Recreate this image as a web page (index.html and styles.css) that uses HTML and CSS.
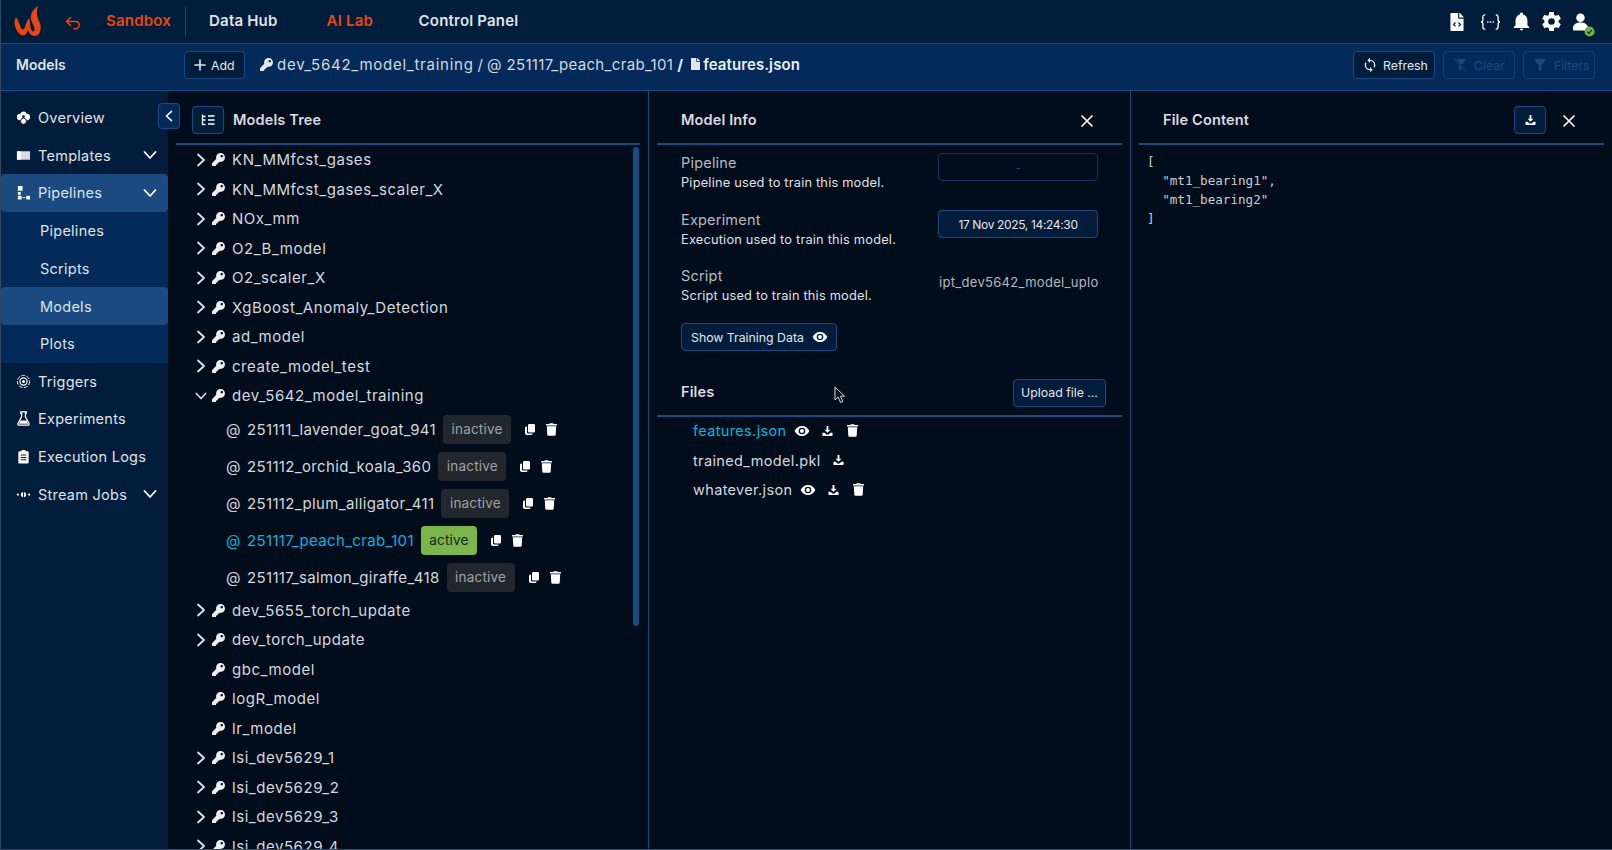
FILE: index.html
```html
<!DOCTYPE html>
<html lang="en">
<head>
<meta charset="utf-8">
<title>Models</title>
<link rel="stylesheet" href="styles.css">
</head>
<body>
<svg class="defs" width="0" height="0" aria-hidden="true">
  <symbol id="i-key" viewBox="0 0 512 512"><path d="M512 176c0 97.2-78.8 176-176 176-11.2 0-22.2-1.1-32.8-3.1l-24 27A24 24 0 0 1 261.200 384H224v40c0 13.300-10.700 24-24 24h-40v40c0 13.300-10.700 24-24 24H24c-13.300 0-24-10.700-24-24v-78.100c0-6.300 2.500-12.400 7-16.900l161.800-161.800C163.100 213.800 160 195.300 160 176 160 78.800 238.800 0 336 0c97.500 0 176 78.500 176 176zM336 128c0 26.500 21.500 48 48 48s48-21.500 48-48-21.500-48-48-48-48 21.500-48 48z"/></symbol>
  <symbol id="i-trash" viewBox="0 0 448 512"><path d="M432 32H312l-9.400-18.700A24 24 0 0 0 281.100 0H166.800a23.700 23.700 0 0 0-21.400 13.300L136 32H16A16 16 0 0 0 0 48v32a16 16 0 0 0 16 16h416a16 16 0 0 0 16-16V48a16 16 0 0 0-16-16zM53.200 467a48 48 0 0 0 47.900 45h245.800a48 48 0 0 0 47.900-45L416 128H32z"/></symbol>
  <symbol id="i-copy" viewBox="0 0 24 24"><path d="M8 3.500A2.500 2.500 0 0 1 10.500 1h9A2.500 2.500 0 0 1 22 3.500v12a2.500 2.500 0 0 1-2.500 2.500h-9A2.500 2.500 0 0 1 8 15.500z"/><path d="M5 6h1v11.500A2.500 2.500 0 0 0 8.500 20H17v.5A2.500 2.500 0 0 1 14.500 23h-9A3.500 3.500 0 0 1 2 19.500V9a3 3 0 0 1 3-3z"/></symbol>
  <symbol id="i-eye" viewBox="0 0 24 24"><path d="M12 9a3 3 0 1 0 0 6 3 3 0 0 0 0-6m0 8a5 5 0 1 1 0-10 5 5 0 0 1 0 10m0-12.500C7 4.500 2.730 7.610 1 12c1.730 4.390 6 7.500 11 7.500s9.270-3.110 11-7.500c-1.730-4.390-6-7.500-11-7.500z"/></symbol>
  <symbol id="i-download" viewBox="0 0 24 24"><path d="M10 1h4v8.500h4.500L12 16 5.500 9.500H10z"/><path d="M1 16h5l3.500 3.500h5L18 16h5v5.500a1.500 1.500 0 0 1-1.500 1.500h-19A1.500 1.500 0 0 1 1 21.500z"/></symbol>
  <symbol id="i-right" viewBox="0 0 12 14"><path d="M3 1.500 9 7l-6 5.500" fill="none" stroke="currentColor" stroke-width="1.800" stroke-linecap="round" stroke-linejoin="round"/></symbol>
  <symbol id="i-down" viewBox="0 0 14 12"><path d="M1.500 3 7 9l5.500-6" fill="none" stroke="currentColor" stroke-width="1.800" stroke-linecap="round" stroke-linejoin="round"/></symbol>
  <symbol id="i-close" viewBox="0 0 14 14"><path d="M2 2l10 10M12 2 2 12" fill="none" stroke="currentColor" stroke-width="1.700" stroke-linecap="round"/></symbol>
  <symbol id="i-plus" viewBox="0 0 12 12"><path d="M6 1v10M1 6h10" fill="none" stroke="currentColor" stroke-width="1.600" stroke-linecap="round"/></symbol>
  <symbol id="i-sync" viewBox="0 0 24 24"><path d="M12 18a6 6 0 0 1-6-6c0-1 .25-1.970.7-2.800L5.240 7.740A7.900 7.900 0 0 0 4 12a8 8 0 0 0 8 8v3l4-4-4-4m0-11V1L8 5l4 4V6a6 6 0 0 1 6 6c0 1-.25 1.970-.7 2.800l1.460 1.460A7.900 7.900 0 0 0 20 12a8 8 0 0 0-8-8z"/></symbol>
  <symbol id="i-filter" viewBox="0 0 24 24"><path d="M14 12v7.880c.04.3-.06.62-.29.830a1 1 0 0 1-1.410 0l-2.010-2.010a1 1 0 0 1-.29-.83V12h-.03L4.210 4.620A1 1 0 0 1 5 3h14a1 1 0 0 1 .79 1.620L14.030 12z"/></symbol>
  <symbol id="i-filter-off" viewBox="0 0 24 24"><path d="M14 12v7.880c.04.3-.06.62-.29.830a1 1 0 0 1-1.410 0l-2.010-2.010a1 1 0 0 1-.29-.83V12h-.03L4.210 4.620A1 1 0 0 1 5 3h14a1 1 0 0 1 .79 1.620L14.030 12z"/><path d="M3 2l19 20" fill="none" stroke="#042a5a" stroke-width="3"/><path d="M3 2l19 20" fill="none" stroke="currentColor" stroke-width="1.500"/></symbol>
  <symbol id="i-file" viewBox="0 0 384 512"><path d="M224 136V0H24C10.700 0 0 10.700 0 24v464c0 13.300 10.700 24 24 24h336c13.300 0 24-10.700 24-24V160H248c-13.200 0-24-10.800-24-24zM384 122v6H256V0h6.100c6.400 0 12.500 2.500 17 7l97.900 98c4.500 4.500 7 10.600 7 17z"/></symbol>
</svg>

<div class="app">
  <header class="topbar">
    <svg class="logo" viewBox="0 0 28 31" aria-hidden="true"><path d="M2 11C-1 16 1 25 7 29c3 1.500 6-1 7-5 1 4 5 7 9 5.500 4-2.500 5-8.500 2-14.500-2-4-3-9-1-15-5 3-8 8-7 13 .5 4 4 7 3.500 11-.3 2-2.500 2-3.500-1-1-3-1-7-1.500-11-2.500 2-3.500 6-4.500 9-1 3-3 3-4 1-1.500-3-2-7-5-11z"/></svg>
    <svg class="back" viewBox="0 0 16 14" aria-hidden="true"><path d="M5.500 1.500 1.500 5.500l4 4M1.500 5.500h9a3.700 3.700 0 0 1 3.700 3.600 3.700 3.700 0 0 1-3.700 3.700H9" fill="none" stroke="currentColor" stroke-width="1.500" stroke-linecap="round" stroke-linejoin="round"/></svg>
    <span class="top-link top-link-sandbox orange">Sandbox</span>
    <span class="top-div"></span>
    <span class="top-link top-link-hub">Data Hub</span>
    <span class="top-link top-link-lab orange">AI Lab</span>
    <span class="top-link top-link-panel">Control Panel</span>
    <div class="top-icons">
      <svg class="ti ti-file" viewBox="0 0 384 512" aria-hidden="true"><use href="#i-file"/><path d="M150 270 95 325l55 55M234 270l55 55-55 55" fill="none" stroke="#021f3d" stroke-width="36"/></svg>
      <svg class="ti ti-braces" viewBox="0 0 22 18" aria-hidden="true"><path d="M5 1.500C3 1.500 3 3 3 4.500V7c0 1.200-.7 2-2 2 1.300 0 2 .8 2 2v2.500c0 1.500 0 3 2 3M17 1.500c2 0 2 1.500 2 3V7c0 1.200.7 2 2 2-1.300 0-2 .8-2 2v2.500c0 1.500 0 3-2 3" fill="none" stroke="#fff" stroke-width="1.400" stroke-linecap="round"/><path d="M7.500 8.300h1.400v1.400H7.500zM10.300 8.300h1.400v1.400h-1.400zM13.100 8.300h1.400v1.400h-1.400z" fill="#fff"/></svg>
      <svg class="ti ti-bell" viewBox="2 1.500 20 22" aria-hidden="true"><path d="M21 19v1H3v-1l2-2v-6c0-3.100 2.030-5.830 5-6.710V4a2 2 0 0 1 4 0v.29c2.970.88 5 3.610 5 6.710v6zM14 21a2 2 0 0 1-4 0z"/></svg>
      <svg class="ti ti-gear" viewBox="2 2 20 20" aria-hidden="true"><path d="M12 15.500a3.500 3.500 0 1 1 0-7 3.500 3.500 0 0 1 0 7m7.430-2.530c.04-.32.07-.64.07-.97s-.03-.66-.07-1l2.110-1.630a.5.500 0 0 0 .12-.64l-2-3.460a.5.500 0 0 0-.61-.22l-2.490 1a7.300 7.300 0 0 0-1.690-.98l-.37-2.650A.5.500 0 0 0 14 2h-4a.5.500 0 0 0-.5.420l-.37 2.650a7.300 7.300 0 0 0-1.690.98l-2.490-1a.5.500 0 0 0-.61.220l-2 3.460a.5.500 0 0 0 .12.64L4.570 11c-.04.34-.07.67-.07 1s.03.65.07.97l-2.110 1.660a.5.500 0 0 0-.12.64l2 3.460c.12.22.39.3.61.22l2.490-1.010c.52.4 1.060.74 1.690.99l.37 2.650c.04.24.25.42.5.42h4c.25 0 .46-.18.5-.42l.37-2.650c.63-.26 1.170-.59 1.690-.99l2.490 1.010c.22.08.49 0 .61-.22l2-3.460a.5.500 0 0 0-.12-.64z"/></svg>
      <span class="user">
        <svg class="ti ti-user" viewBox="0 0 18 19" aria-hidden="true"><circle cx="9" cy="5" r="4.500"/><path d="M1 16c0-4 3.500-6 8-6s8 2 8 6v1.500a1 1 0 0 1-1 1H2a1 1 0 0 1-1-1z"/></svg>
        <svg class="user-badge" viewBox="0 0 12 12" aria-hidden="true"><circle cx="6" cy="6" r="5.500" fill="#79b04a"/><path d="M3.400 6.200 5.300 8l3.300-3.800" fill="none" stroke="#0b2a22" stroke-width="1.300"/></svg>
      </span>
    </div>
  </header>

  <div class="subbar">
    <span class="sub-title">Models</span>
    <button class="btn btn-add"><svg class="ic12" aria-hidden="true"><use href="#i-plus"/></svg>Add</button>
    <div class="crumbs">
      <svg class="ic14 fill" aria-hidden="true"><use href="#i-key"/></svg>
      <span class="crumb-a">dev_5642_model_training</span><span class="slash">/</span><span class="crumb-b">@ 251117_peach_crab_101</span><span class="slash slash-b">/</span>
      <svg class="crumb-file fill" aria-hidden="true"><use href="#i-file"/></svg>
      <b>features.json</b>
    </div>
    <div class="sub-actions">
      <button class="btn btn-refresh"><svg class="ic16 fill" aria-hidden="true"><use href="#i-sync"/></svg>Refresh</button>
      <button class="btn btn-off btn-clear"><svg class="ic16 fill" aria-hidden="true"><use href="#i-filter-off"/></svg>Clear</button>
      <button class="btn btn-off btn-filters"><svg class="ic16 fill" aria-hidden="true"><use href="#i-filter"/></svg>Filters</button>
    </div>
  </div>

  <div class="body">
    <nav class="side">
      <a class="nav"><svg class="nav-ic" viewBox="0 0 16 16" aria-hidden="true"><path d="M8 1.500a3.600 3.600 0 0 1 3.400 2.500A3.500 3.500 0 0 1 15 7.500 3.500 3.500 0 0 1 12 11H4.200A3.500 3.500 0 0 1 1 7.500 3.500 3.500 0 0 1 4.600 4 3.600 3.600 0 0 1 8 1.500z"/><circle cx="8" cy="12" r="3.200" stroke="#021d3b" stroke-width="1"/><circle cx="8" cy="7" r="1.500" fill="#021d3b"/></svg><span>Overview</span></a>
      <a class="nav"><svg class="nav-ic" viewBox="0 0 16 16" aria-hidden="true"><path d="M1 3.500h14v9H1z" opacity=".85"/><path d="M1 3.500h4v9H1z"/></svg><span>Templates</span><svg class="nav-chev" aria-hidden="true"><use href="#i-down"/></svg></a>
      <a class="nav nav-on"><svg class="nav-ic" viewBox="0 0 16 16" aria-hidden="true"><path d="M2 1h5v5H2zM2 7.500h3v3H2zM2 11.500h4v4H2zM11 11.500h4v4h-4z"/><path d="M7 13.500h3" stroke="#fff"/></svg><span>Pipelines</span><svg class="nav-chev" aria-hidden="true"><use href="#i-down"/></svg></a>
      <div class="subnav">
        <a class="nav nav-sub"><span>Pipelines</span></a>
        <a class="nav nav-sub"><span>Scripts</span></a>
        <a class="nav nav-sub nav-on"><span>Models</span></a>
        <a class="nav nav-sub"><span>Plots</span></a>
      </div>
      <a class="nav"><svg class="nav-ic" viewBox="0 0 16 16" aria-hidden="true"><g fill="none" stroke="#fff"><circle cx="8" cy="8" r="6.500" stroke-dasharray="4 1.500"/><circle cx="8" cy="8" r="3.800" stroke-width="1.300"/></g><circle cx="8" cy="8" r="1.600"/></svg><span>Triggers</span></a>
      <a class="nav"><svg class="nav-ic" viewBox="0 0 16 16" aria-hidden="true"><path d="M5 1h6v1.500h-1V6l4 7.500a1 1 0 0 1-.9 1.500H2.900a1 1 0 0 1-.9-1.500L6 6V2.500H5z" fill="none" stroke="#fff" stroke-width="1.300"/><path d="M4.600 10h6.800l1.400 3.700H3.200z"/></svg><span>Experiments</span></a>
      <a class="nav"><svg class="nav-ic" viewBox="0 0 16 16" aria-hidden="true"><path d="M3.500 2.500H6V1h4v1.500h2.500A1 1 0 0 1 13.500 3.500v11a1 1 0 0 1-1 1h-9a1 1 0 0 1-1-1v-11a1 1 0 0 1 1-1z"/><path d="M5 6.500h6M5 9h6M5 11.500h6" stroke="#021d3b" stroke-width="1.100"/></svg><span>Execution Logs</span></a>
      <a class="nav"><svg class="nav-ic" viewBox="0 0 16 16" aria-hidden="true"><circle cx="8" cy="8" r="2.800"/><circle cx="2" cy="8" r="1.200"/><circle cx="14" cy="8" r="1.200"/><path d="M8 3.500v9" stroke="#021d3b"/></svg><span>Stream Jobs</span><svg class="nav-chev" aria-hidden="true"><use href="#i-down"/></svg></a>
    </nav>

    <button class="collapse" aria-label="Collapse"><svg class="ic-collapse" aria-hidden="true"><use href="#i-right"/></svg></button>

    <section class="panel">
      <div class="panel-head head-tree">
        <button class="icon-btn"><svg class="ic-tree" viewBox="0 0 14 14" aria-hidden="true"><path d="M1.500 1.500v10.500M1.500 3.500h3M1.500 7h3M1.500 11.500h3M7 3h6.500M7 7h6.500M7 11h6.500" fill="none" stroke="#fff" stroke-width="1.300"/></svg></button>
        <h2>Models Tree</h2>
      </div>
      <div class="tree">
        <div class="tree-rows">
          <div class="row"><svg class="chev" aria-hidden="true"><use href="#i-right"/></svg><svg class="key" aria-hidden="true"><use href="#i-key"/></svg><span>KN_MMfcst_gases</span></div>
          <div class="row"><svg class="chev" aria-hidden="true"><use href="#i-right"/></svg><svg class="key" aria-hidden="true"><use href="#i-key"/></svg><span>KN_MMfcst_gases_scaler_X</span></div>
          <div class="row"><svg class="chev" aria-hidden="true"><use href="#i-right"/></svg><svg class="key" aria-hidden="true"><use href="#i-key"/></svg><span>NOx_mm</span></div>
          <div class="row"><svg class="chev" aria-hidden="true"><use href="#i-right"/></svg><svg class="key" aria-hidden="true"><use href="#i-key"/></svg><span>O2_B_model</span></div>
          <div class="row"><svg class="chev" aria-hidden="true"><use href="#i-right"/></svg><svg class="key" aria-hidden="true"><use href="#i-key"/></svg><span>O2_scaler_X</span></div>
          <div class="row"><svg class="chev" aria-hidden="true"><use href="#i-right"/></svg><svg class="key" aria-hidden="true"><use href="#i-key"/></svg><span>XgBoost_Anomaly_Detection</span></div>
          <div class="row"><svg class="chev" aria-hidden="true"><use href="#i-right"/></svg><svg class="key" aria-hidden="true"><use href="#i-key"/></svg><span>ad_model</span></div>
          <div class="row"><svg class="chev" aria-hidden="true"><use href="#i-right"/></svg><svg class="key" aria-hidden="true"><use href="#i-key"/></svg><span>create_model_test</span></div>
          <div class="row"><svg class="chev" aria-hidden="true"><use href="#i-down"/></svg><svg class="key" aria-hidden="true"><use href="#i-key"/></svg><span>dev_5642_model_training</span></div>

          <div class="child"><span class="at">@</span><span class="cname">251111_lavender_goat_941</span><span class="tag">inactive</span><svg class="act-copy" aria-hidden="true"><use href="#i-copy"/></svg><svg class="act-trash" aria-hidden="true"><use href="#i-trash"/></svg></div>
          <div class="child"><span class="at">@</span><span class="cname">251112_orchid_koala_360</span><span class="tag">inactive</span><svg class="act-copy" aria-hidden="true"><use href="#i-copy"/></svg><svg class="act-trash" aria-hidden="true"><use href="#i-trash"/></svg></div>
          <div class="child"><span class="at">@</span><span class="cname">251112_plum_alligator_411</span><span class="tag">inactive</span><svg class="act-copy" aria-hidden="true"><use href="#i-copy"/></svg><svg class="act-trash" aria-hidden="true"><use href="#i-trash"/></svg></div>
          <div class="child child-on"><span class="at">@</span><span class="cname">251117_peach_crab_101</span><span class="tag tag-on">active</span><svg class="act-copy" aria-hidden="true"><use href="#i-copy"/></svg><svg class="act-trash" aria-hidden="true"><use href="#i-trash"/></svg></div>
          <div class="child"><span class="at">@</span><span class="cname">251117_salmon_giraffe_418</span><span class="tag">inactive</span><svg class="act-copy" aria-hidden="true"><use href="#i-copy"/></svg><svg class="act-trash" aria-hidden="true"><use href="#i-trash"/></svg></div>

          <div class="row"><svg class="chev" aria-hidden="true"><use href="#i-right"/></svg><svg class="key" aria-hidden="true"><use href="#i-key"/></svg><span>dev_5655_torch_update</span></div>
          <div class="row"><svg class="chev" aria-hidden="true"><use href="#i-right"/></svg><svg class="key" aria-hidden="true"><use href="#i-key"/></svg><span>dev_torch_update</span></div>
          <div class="row"><span class="chev"></span><svg class="key" aria-hidden="true"><use href="#i-key"/></svg><span>gbc_model</span></div>
          <div class="row"><span class="chev"></span><svg class="key" aria-hidden="true"><use href="#i-key"/></svg><span>logR_model</span></div>
          <div class="row"><span class="chev"></span><svg class="key" aria-hidden="true"><use href="#i-key"/></svg><span>lr_model</span></div>
          <div class="row"><svg class="chev" aria-hidden="true"><use href="#i-right"/></svg><svg class="key" aria-hidden="true"><use href="#i-key"/></svg><span>lsi_dev5629_1</span></div>
          <div class="row"><svg class="chev" aria-hidden="true"><use href="#i-right"/></svg><svg class="key" aria-hidden="true"><use href="#i-key"/></svg><span>lsi_dev5629_2</span></div>
          <div class="row"><svg class="chev" aria-hidden="true"><use href="#i-right"/></svg><svg class="key" aria-hidden="true"><use href="#i-key"/></svg><span>lsi_dev5629_3</span></div>
          <div class="row"><svg class="chev" aria-hidden="true"><use href="#i-right"/></svg><svg class="key" aria-hidden="true"><use href="#i-key"/></svg><span>lsi_dev5629_4</span></div>
        </div>
        <div class="scrollthumb"></div>
      </div>
    </section>

    <section class="panel panel-b">
      <div class="panel-head head-text">
        <h2>Model Info</h2>
        <svg class="close" aria-hidden="true"><use href="#i-close"/></svg>
      </div>
      <div class="info">
        <div class="field">
          <div><div class="f-label">Pipeline</div><div class="f-desc">Pipeline used to train this model.</div></div>
          <div class="f-box f-box-off">-</div>
        </div>
        <div class="field">
          <div><div class="f-label">Experiment</div><div class="f-desc">Execution used to train this model.</div></div>
          <div class="f-box">17 Nov 2025, 14:24:30</div>
        </div>
        <div class="field">
          <div><div class="f-label">Script</div><div class="f-desc">Script used to train this model.</div></div>
          <div class="f-text">ipt_dev5642_model_uplo</div>
        </div>
        <button class="btn btn-train">Show Training Data<svg class="ic-eye" aria-hidden="true"><use href="#i-eye"/></svg></button>
      </div>
      <div class="panel-head head-files">
        <h2>Files</h2>
        <button class="btn btn-upload">Upload file ...</button>
      </div>
      <div class="files">
        <div class="file file-on"><span>features.json</span><svg class="ic-eye" aria-hidden="true"><use href="#i-eye"/></svg><svg class="ic-dl" aria-hidden="true"><use href="#i-download"/></svg><svg class="act-trash" aria-hidden="true"><use href="#i-trash"/></svg></div>
        <div class="file"><span>trained_model.pkl</span><svg class="ic-dl" aria-hidden="true"><use href="#i-download"/></svg></div>
        <div class="file"><span>whatever.json</span><svg class="ic-eye" aria-hidden="true"><use href="#i-eye"/></svg><svg class="ic-dl" aria-hidden="true"><use href="#i-download"/></svg><svg class="act-trash" aria-hidden="true"><use href="#i-trash"/></svg></div>
      </div>
      <svg class="cursor" viewBox="0 0 12 18" aria-hidden="true"><path d="M1 1v13l3.200-3 2.300 5.500 2.300-1-2.300-5.300H10.500z" fill="#0a0f18" stroke="#d8dce0" stroke-width="1"/></svg>
    </section>

    <section class="panel panel-b">
      <div class="panel-head head-text">
        <h2>File Content</h2>
        <div class="head-right">
          <button class="icon-btn icon-btn-dl"><svg class="ic-dl" aria-hidden="true"><use href="#i-download"/></svg></button>
          <svg class="close" aria-hidden="true"><use href="#i-close"/></svg>
        </div>
      </div>
<pre class="code">[
  "mt1_bearing1",
  "mt1_bearing2"
]</pre>
    </section>
  </div>
</div>
</body>
</html>
```
FILE: styles.css
```css
* { box-sizing: border-box; }
html, body { margin: 0; height: 100%; }
body {
  background: #020d1c;
  color: #d5d8dc;
  font-family: Inter, "Noto Sans", sans-serif;
  font-size: 14px;
  overflow: hidden;
}
.defs { position: absolute; }
svg { display: block; flex: none; fill: currentColor; }

.app {
  height: 850px;
  display: flex;
  flex-direction: column;
  border-left: 1px solid #33465e;
  border-bottom: 1px solid #33465e;
  overflow: hidden;
}

/* top bar */
.topbar {
  height: 44px;
  flex: none;
  display: flex;
  align-items: center;
  background: #021d3b;
  border-bottom: 1px solid #1a4a80;
}
.logo { width: 28px; height: 31px; margin-left: 13px; color: #e8470f; }
.back { width: 16px; height: 14px; margin-left: 23px; margin-top: 2px; color: #e8470f; }
.top-link { font-size: 15px; font-weight: 600; color: #dfe2e6; letter-spacing: .2px; white-space: nowrap; margin-top: -2px; }
.orange { color: #e8470f; }
.top-link-sandbox { margin-left: 25px; }
.top-div { width: 1px; height: 29px; background: #1a4a80; margin-left: 14px; }
.top-link-hub { margin-left: 23px; }
.top-link-lab { margin-left: 49px; }
.top-link-panel { margin-left: 45.5px; }
.top-icons { margin-left: auto; display: flex; align-items: center; margin-right: 23px; color: #fff; }
.ti { color: #fff; }
.ti-file { width: 14px; height: 18px; }
.ti-braces { width: 21px; height: 18px; margin-left: 16px; }
.ti-bell { width: 17px; height: 19px; margin-left: 12px; }
.ti-gear { width: 19px; height: 19px; margin-left: 12px; }
.user { position: relative; margin-left: 11px; }
.ti-user { width: 17px; height: 18px; }
.user-badge { position: absolute; width: 11px; height: 11px; left: 12px; top: 13px; }

/* sub bar */
.subbar {
  height: 47px;
  flex: none;
  display: flex;
  align-items: center;
  background: #042a5a;
  border-bottom: 1px solid #1a4a80;
  padding-bottom: 4px;
}
.sub-title { margin-left: 15px; font-weight: 600; font-size: 14px; color: #dfe2e6; width: 168px; margin-top: -2px; }
.btn {
  display: inline-flex;
  align-items: center;
  height: 28px;
  background: #021d3b;
  border: 1px solid #1a4a80;
  border-radius: 4px;
  color: #e4e6ea;
  font: 400 12.3px Inter, "Noto Sans", sans-serif;
  padding: 0;
  white-space: nowrap;
}
.btn-add { width: 61px; padding-left: 9px; gap: 5px; }
.ic12 { width: 12px; height: 12px; }
.ic14 { width: 13px; height: 13px; }
.ic16 { width: 16px; height: 16px; }
.fill { color: #e4e6ea; }
.crumbs { margin-left: 15px; margin-top: -2px; display: flex; align-items: center; font-size: 15px; color: #d5d8dc; white-space: nowrap; }
.crumbs svg.ic14 { margin-right: 4px; }
.crumb-a { letter-spacing: .75px; }
.crumb-b { letter-spacing: .35px; }
.slash { margin: 0 4px; }
.slash-b { font-weight: 700; color: #eceef0; }
.crumb-file { width: 9px; height: 12px; margin: 0 3px 0 4px; }
.crumbs b { font-weight: 600; font-size: 15px; letter-spacing: .1px; color: #eceef0; }
.sub-actions { margin-left: auto; margin-right: 17px; display: flex; gap: 8px; }
.btn-refresh { width: 82px; padding-left: 8px; gap: 5px; }
.btn-off { background: transparent; border-color: #17406f; color: #1f4a7a; padding-left: 8px; gap: 6px; width: 72px; }
.btn-off svg { color: #1f4a7a; }

/* body */
.body { flex: 1; min-height: 0; display: flex; position: relative; }
.side { width: 167px; flex: none; background: #021d3b; padding-top: 8px; }
.nav { height: 37.7px; display: flex; align-items: center; color: #dfe2e6; font-size: 14.5px; letter-spacing: .25px; padding: 0 0 1px 15px; position: relative; }
.nav > span { margin-left: 7px; }
.nav-ic { width: 15px; height: 15px; color: #fff; }
.nav-chev { width: 14px; height: 12px; margin-left: auto; margin-right: 11px; color: #fff; }
.nav-on { background: #1a4a80; border-radius: 4px; }
.subnav { background: #042a5a; }
.nav-sub { padding: 0 0 0 31px; }
.nav-sub > span { margin-left: 8px; }
.collapse {
  position: absolute;
  left: 157px;
  top: 12px;
  width: 22px;
  height: 26px;
  background: #042a5a;
  border: 1px solid #1a4a80;
  border-radius: 4px;
  display: flex;
  align-items: center;
  justify-content: center;
  padding: 0;
  color: #fff;
}
.ic-collapse { width: 10px; height: 12px; transform: scaleX(-1); }

.panel { width: 480px; flex: none; display: flex; flex-direction: column; position: relative; min-height: 0; }
.panel-b { border-left: 1px solid #1a4a80; width: 482px; }
.panel-head { display: flex; align-items: center; height: 54px; flex: none; border-bottom: 2px solid #1a4a80; margin: 0 8px; padding-top: 5px; }
.panel-head h2 { margin: 0; font-size: 14.5px; font-weight: 600; color: #d9dce0; letter-spacing: .15px; }
.head-tree { padding-left: 16px; }
.head-tree h2 { margin-left: 9px; }
.head-text { padding-left: 24px; justify-content: space-between; }
.head-text .close { margin-right: 28px; margin-top: 2px; }
.head-right { display: flex; align-items: center; }
.head-right .close { margin-left: 16px; margin-right: 28px; }
.icon-btn { width: 32px; height: 28px; border: 1px solid #1a4a80; border-radius: 4px; background: #021d3b; padding: 0; display: flex; align-items: center; justify-content: center; color: #fff; }
.ic-tree { width: 14px; height: 14px; }
.close { width: 14px; height: 14px; color: #fff; }

.tree { flex: 1; min-height: 0; overflow: hidden; position: relative; }
.tree-rows { padding-left: 27px; }
.row { height: 29.5px; display: flex; align-items: center; font-size: 15px; letter-spacing: .55px; color: #d5d8dc; white-space: nowrap; }
.chev { width: 12px; height: 14px; color: #dfe2e6; }
.key { width: 13px; height: 13px; margin-left: 5px; color: #eceef0; }
.row > span:last-child { margin-left: 7px; }
.child { height: 37px; display: flex; align-items: center; font-size: 15px; letter-spacing: .35px; padding-left: 31px; color: #d5d8dc; white-space: nowrap; }
.at { width: 14px; }
.cname { margin-left: 7px; }
.tag { height: 29px; width: 68px; margin-left: 7px; border-radius: 4px; background: #22272e; color: #9ea3a9; font-size: 13.5px; letter-spacing: .2px; display: flex; align-items: center; justify-content: center; }
.tag-on { background: #7ab64c; color: #12261d; width: 56px; }
.child-on { color: #08b3df; }
.act-copy { width: 12px; height: 13px; margin-left: 13px; color: #fff; }
.act-trash { width: 11px; height: 13px; margin-left: 10px; color: #fff; }
.scrollthumb { position: absolute; right: 9px; top: 2px; width: 6px; height: 479px; border-radius: 3px; background: #1a4a80; }

.info { padding: 8px 32px 0 32px; }
.field { display: flex; justify-content: space-between; height: 57px; }
.field:nth-child(2) { height: 56px; }
.f-label { font-size: 14.5px; color: #b6babf; letter-spacing: .2px; line-height: 20px; }
.f-desc { font-size: 12.8px; color: #dfe2e6; letter-spacing: .2px; line-height: 20px; }
.f-box { width: 160px; height: 28px; border: 1px solid #1a4a80; background: #021d3b; border-radius: 4px; font-size: 12px; letter-spacing: -.35px; display: flex; align-items: center; justify-content: center; color: #e4e6ea; }
.f-box-off { background: transparent; border-color: #12345e; color: #1f4a7a; }
.f-text { width: 160px; padding: 8px 0 0 1px; overflow: hidden; white-space: nowrap; font-size: 13px; color: #b6babf; letter-spacing: .3px; }
.btn-train { width: 156px; padding-left: 9px; margin-top: 0; gap: 8px; }
.btn-train .ic-eye { color: #fff; }
.ic-eye { width: 16px; height: 16px; color: #fff; }
.ic-dl { width: 11px; height: 12px; color: #fff; }
.head-files { height: 54px; padding-left: 24px; padding-top: 7px; justify-content: space-between; margin-top: 12px; }
.head-files h2 { margin-top: -2px; }
.btn-upload { width: 93px; justify-content: center; margin-right: 16px; }
.files { padding: 0 0 0 44px; margin-top: -1px; }
.file { height: 29.5px; display: flex; align-items: center; font-size: 14.5px; letter-spacing: .35px; color: #d5d8dc; }
.file .ic-eye { margin-left: 8px; }
.file .ic-dl { margin-left: 12px; }
.file .act-trash { margin-left: 14px; }
.file-on > span { color: #08b3df; }
.cursor { position: absolute; left: 185px; top: 295px; width: 12px; height: 18px; }

.code { margin: 0; padding: 7px 0 0 16px; font: 12.6px/19px "DejaVu Sans Mono", monospace; color: #c9ccd0; }
```
